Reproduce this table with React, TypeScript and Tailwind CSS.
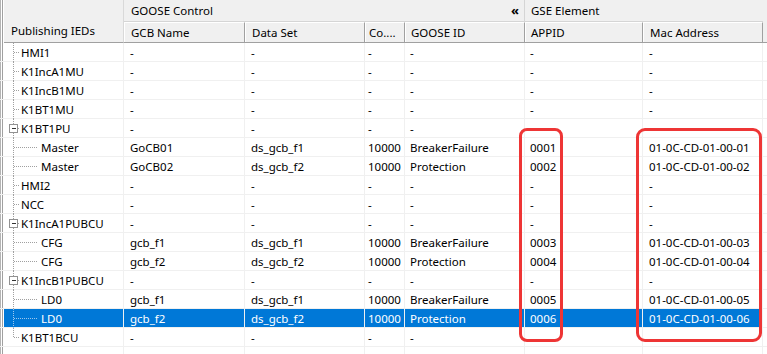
import React from "react";

type Row = {
  name: string;
  level?: number;
  expander?: boolean;
  gcb?: string;
  ds?: string;
  co?: string;
  gid?: string;
  appid?: string;
  mac?: string;
  selected?: boolean;
  last?: boolean;
};

const rows: Row[] = [
  { name: "HMI1" },
  { name: "K1IncA1MU" },
  { name: "K1IncB1MU" },
  { name: "K1BT1MU" },
  { name: "K1BT1PU", expander: true },
  { name: "Master", level: 1, gcb: "GoCB01", ds: "ds_gcb_f1", co: "10000", gid: "BreakerFailure", appid: "0001", mac: "01-0C-CD-01-00-01" },
  { name: "Master", level: 1, gcb: "GoCB02", ds: "ds_gcb_f2", co: "10000", gid: "Protection", appid: "0002", mac: "01-0C-CD-01-00-02" },
  { name: "HMI2" },
  { name: "NCC" },
  { name: "K1IncA1PUBCU", expander: true },
  { name: "CFG", level: 1, gcb: "gcb_f1", ds: "ds_gcb_f1", co: "10000", gid: "BreakerFailure", appid: "0003", mac: "01-0C-CD-01-00-03" },
  { name: "CFG", level: 1, gcb: "gcb_f2", ds: "ds_gcb_f2", co: "10000", gid: "Protection", appid: "0004", mac: "01-0C-CD-01-00-04" },
  { name: "K1IncB1PUBCU", expander: true },
  { name: "LD0", level: 1, gcb: "gcb_f1", ds: "ds_gcb_f1", co: "10000", gid: "BreakerFailure", appid: "0005", mac: "01-0C-CD-01-00-05" },
  { name: "LD0", level: 1, gcb: "gcb_f2", ds: "ds_gcb_f2", co: "10000", gid: "Protection", appid: "0006", mac: "01-0C-CD-01-00-06", selected: true },
  { name: "K1BT1BCU", last: true },
];

function Edge() {
  return (
    <div className="flex h-full w-[4px] shrink-0">
      <div className="w-[1px] bg-[#b4b4b4]" />
      <div className="w-[1px] bg-white" />
      <div className="w-[1px] bg-[#a0a0a0]" />
      <div className="w-[1px] bg-white" />
    </div>
  );
}

function Tree({ row }: { row: Row }) {
  const dot = row.selected ? "#9cc6ec" : "#a0a0a0";
  const child = row.level === 1;
  return (
    <svg width="40" height="19" className="absolute left-0 top-0" shapeRendering="crispEdges">
      <line x1="9.5" y1="0" x2="9.5" y2={row.last ? 10 : 19} stroke={dot} strokeDasharray="1 1" />
      <line x1={row.expander ? 14 : 10} y1="9.5" x2={child ? 34 : 16} y2="9.5" stroke={dot} strokeDasharray="1 1" />
      {row.expander && (
        <g>
          <rect x="5.5" y="5.5" width="8" height="8" fill="white" stroke="#919191" />
          <line x1="7.5" y1="9.5" x2="12" y2="9.5" stroke="#333" />
        </g>
      )}
    </svg>
  );
}

function Cell({ w, pl = "pl-[6px]", children }: { w: string; pl?: string; children?: React.ReactNode }) {
  return (
    <div className={`${w} ${pl} shrink-0 h-full border-r border-[#f0f0f0] overflow-hidden whitespace-nowrap`}>{children}</div>
  );
}

export default function App() {
  return (
    <div
      className="relative w-[767px] h-[354px] overflow-hidden bg-white text-[11.5px] text-black select-none"
      style={{ fontFamily: '"Noto Sans", "Open Sans", sans-serif' }}
    >
      <div className="flex h-[43px]">
        <Edge />
        <div className="w-[120px] shrink-0 flex items-end pb-[3px] pl-[7px] bg-[#f0f0f0] border-r border-[#d9d9d9] border-b border-b-[#a0a0a0]">
          Publishing IEDs
        </div>
        <div className="flex flex-col w-[639px] shrink-0">
          <div className="flex h-[22px] bg-[#f0f0f0] border-b border-[#d5d5d5]">
            <div className="w-[401px] shrink-0 flex items-center justify-between pl-[7px] pr-[5px] border-r border-[#d5d5d5]">
              <span>GOOSE Control</span>
              <span className="text-[13px] font-bold leading-none">«</span>
            </div>
            <div className="w-[238px] shrink-0 flex items-center pl-[6px]">GSE Element</div>
          </div>
          <div className="flex h-[21px] bg-[#f0f0f0] border-b border-[#a0a0a0]">
            {[
              ["w-[121px]", "GCB Name", "pl-[6px]"],
              ["w-[120px]", "Data Set", "pl-[6px]"],
              ["w-[40px]", "Co....", "pl-[3px]"],
              ["w-[120px]", "GOOSE ID", "pl-[5px]"],
              ["w-[118px]", "APPID", "pl-[5px]"],
              ["w-[120px]", "Mac Address", "pl-[6px]"],
            ].map(([w, t, pl]) => (
              <div key={t} className={`${w} ${pl} shrink-0 flex items-center border border-white border-r-[#a0a0a0] border-b-0 whitespace-nowrap overflow-hidden`}>
                {t}
              </div>
            ))}
          </div>
        </div>
        <div className="flex-1 bg-[#f0f0f0] border-b border-[#a0a0a0]" />
      </div>

      {[...rows, null].map((r, i) => (
        <div key={i} className="flex h-[19px] leading-[19px] border-b border-[#f0f0f0]">
          <Edge />
          <div className={`flex h-full ${r?.selected ? "bg-[#0078d7] text-white" : ""}`}>
            <div className="relative w-[120px] shrink-0 h-full border-r border-[#f0f0f0]">
              {r && <Tree row={r} />}
              {r && (
                <span className={`absolute top-0 ${r.level === 1 ? "left-[37px]" : "left-[17px]"}`}>{r.name}</span>
              )}
              {!r && (
                <svg width="20" height="19" className="absolute left-0 top-0" shapeRendering="crispEdges">
                  <line x1="9.5" y1="0" x2="9.5" y2="0" stroke="#a0a0a0" />
                </svg>
              )}
            </div>
            <Cell w="w-[121px]">{r ? r.gcb ?? "-" : ""}</Cell>
            <Cell w="w-[120px]">{r ? r.ds ?? "-" : ""}</Cell>
            <Cell w="w-[40px]" pl="pl-[3px]">{r ? r.co ?? "-" : ""}</Cell>
            <Cell w="w-[120px]" pl="pl-[5px]">{r ? r.gid ?? "-" : ""}</Cell>
            <Cell w="w-[118px]" pl="pl-[5px]">{r ? r.appid ?? "-" : ""}</Cell>
            <Cell w="w-[120px]">{r ? r.mac ?? "-" : ""}</Cell>
          </div>
        </div>
      ))}

      <div className="absolute left-[519px] top-[128px] w-[44px] h-[214px] border-[3px] border-[#ee3535] rounded-[8px]" />
      <div className="absolute left-[636px] top-[128px] w-[126px] h-[214px] border-[3px] border-[#ee3535] rounded-[9px]" />
    </div>
  );
}
